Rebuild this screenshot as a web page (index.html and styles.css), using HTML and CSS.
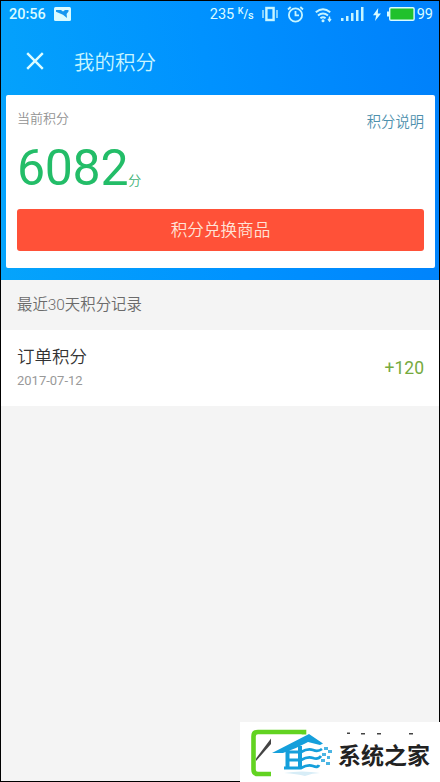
FILE: index.html
```html
<!DOCTYPE html>
<html lang="zh-CN">
<head>
<meta charset="utf-8">
<title>我的积分</title>
<link rel="stylesheet" href="styles.css">
</head>
<body>
<div class="screen">
  <header class="hero">
    <div class="status">
      <span class="time">20:56</span>
      <svg class="photo" width="17" height="14" viewBox="0 0 17 14"><rect width="17" height="14" rx="1.5" fill="#d9fbff"/><path d="M2 3h5l2 1.5L11 3h3.5v1.5L12.6 7l.4 4-4-3.2L2 4.8Z" fill="#1597ef"/></svg>
      <span class="speed">235</span>
      <span class="unit"><sup>K</sup>/<sub>s</sub></span>
      <svg class="vibrate" width="16" height="16" viewBox="0 0 16 16" fill="none" stroke="#c6f5ff"><rect x="4.4" y="2" width="7.2" height="12" stroke-width="2.4"/><path d="M1 4v8M15 4v8" stroke-width="1.3"/></svg>
      <svg class="alarm" width="17" height="17" viewBox="0 0 17 17" fill="none" stroke="#c6f5ff" stroke-width="1.8"><circle cx="8.5" cy="9" r="6.6"/><path d="M8.5 5v4.3H12M1 3.5 3.7 1M16 3.5 13.3 1"/></svg>
      <svg class="wifi" width="17" height="16" viewBox="0 0 17 16" fill="none" stroke="#c6f5ff" stroke-width="2"><path d="M.8 5.2Q8 -.7 15.2 5.2M3 8.5q5-4 10 0M5.4 11.2q2.6-2 5.2 0"/><circle cx="8" cy="13.7" r="1.5" fill="#c6f5ff" stroke="none"/><path d="M14.5 9.5v4M13 12l1.5 2 1.5-2" stroke-width="1.4"/></svg>
      <svg class="signal" width="23" height="14" viewBox="0 0 23 14" fill="#c6f5ff"><path d="M0 11h2.5v3H0zM5 9h2.5v5H5zM10 6h2.5v8H10zM15 3h2.5v11H15zM20 0h2.5v14H20z"/></svg>
      <svg class="bolt" width="8" height="13" viewBox="0 0 8 13"><path d="M5.2 0 0 7.2h3.2L2 13l6-7.6H4.8z" fill="#d9fbff"/></svg>
      <svg class="battery" width="28" height="14" viewBox="0 0 28 14"><path d="M0 4.5h3v5H0z" fill="#d9fbff"/><rect x="2.7" y=".7" width="24.4" height="12.6" rx="1.2" fill="#20c12c" stroke="#d9fbff" stroke-width="1.4"/></svg>
      <span class="percent">99</span>
    </div>
    <div class="titlebar">
      <svg class="close" width="18" height="18" viewBox="0 0 18 18"><path d="m1.2 1.2 15.6 15.6M16.8 1.2 1.2 16.8" stroke="#dcfcff" stroke-width="2.4"/></svg>
      <h1>我的积分</h1>
    </div>
    <section class="card">
      <div class="card-head"><span class="label">当前积分</span><a class="help">积分说明</a></div>
      <div class="score"><span class="value">6082</span><span class="fen">分</span></div>
      <button class="redeem">积分兑换商品</button>
    </section>
  </header>
  <h2 class="section-title">最近30天积分记录</h2>
  <div class="record">
    <div class="info"><div class="name">订单积分</div><div class="date">2017-07-12</div></div>
    <div class="points">+120</div>
  </div>
</div>
<div class="brand">
  <svg class="brand-logo" width="96" height="60" viewBox="0 0 96 60">
    <path d="M64 12.500V10H18q-4.500 0-4.500 4.500v33q0 4.500 4.500 4.500h13" fill="none" stroke="#62d321" stroke-width="4.600"/>
    <path d="m16 36.500 15-20v5.500L16 39Z" fill="#444"/>
    <path d="M32 31 69 12 83 21.500l-3 1.500-12-3-12 6-13 5Z" fill="#159fdb"/>
    <g fill="none" stroke="#159fdb"><path d="M47.500 28v18M60 24v21" stroke-width="4"/><path d="M46 30h15q7-4 12-2t9-1M47 38h14q7-4 12-2t8-2M44 46h17q7-4 12-2t6-1" stroke-width="2.800"/></g>
    <path d="M84 25h4v3h-4zM88 28h4v3h-4zM82 31h4v3h-4zM87 34h3v3h-3zM81 37h4v3h-4zM86 40h4v3h-4z" fill="#4bb5e3"/>
    <path d="M44 51q18-3 36 0-8 0-15 3-8-2-21-3Z" fill="#d7edf7"/>
  </svg>
  <div class="brand-copy">
    <svg width="92" height="14" viewBox="0 0 92 14"><path d="M9 10.500h3V12H9zM23 11h4v1.500h-4zM39 11h4v1.500h-4zM71 11h4v1.500h-4z" fill="#444"/></svg>
    <div class="brand-name">系统之家</div>
  </div>
</div>
</body>
</html>
```
FILE: styles.css
```css
* { box-sizing: border-box; }
body { margin: 0; width: 440px; height: 782px; overflow: hidden; position: relative; font-family: Roboto, "Noto Sans CJK SC", sans-serif; font-weight: 300; }
.screen { height: 782px; border: 1px solid #000; background: #f4f4f4; }
.hero { height: 279px; padding: 0 4px 0 5px; background: linear-gradient(80deg, #05a4fb, #0092ff 50%, #0080fb); }
.status { height: 26px; margin-left: -5px; margin-right: -4px; padding: 0 6px 0 8px; display: flex; align-items: center; color: #d9fbff; font-size: 14.5px; font-weight: 500; line-height: 27px; }
.status svg { flex: none; }
.time { width: 37px; }
.photo { margin-left: 8px; }
.speed { margin-left: 139px; width: 25px; font-weight: 400; }
.unit { margin-left: 3px; width: 16px; font-size: 12px; white-space: nowrap; }
.unit sup, .unit sub { font-size: 9px; line-height: 0; }
.unit sup { vertical-align: 4px; }
.unit sub { vertical-align: -1px; font-size: 11px; }
.vibrate { margin-left: 8px; }
.alarm { margin-left: 9px; }
.wifi { margin-left: 11px; margin-top: 2px; }
.signal { margin-left: 9px; }
.bolt { margin-left: 9px; }
.battery { margin-left: 6px; }
.percent { margin-left: 2px; font-weight: 400; }
.titlebar { height: 68px; display: flex; align-items: center; padding-left: 20px; }
.titlebar h1 { margin: 3px 0 0 30px; font-size: 20.5px; line-height: 30px; font-weight: 350; color: #c9f5ff; }
.card { height: 173px; padding: 14px 11px 0; background: #fff; border-radius: 2px; }
.card-head { display: flex; justify-content: space-between; line-height: 20px; }
.label { font-size: 13px; font-weight: 350; color: #929292; }
.help { margin-top: 3px; font-size: 14.3px; color: #4d90ad; font-weight: 350; }
.score { height: 77px; display: flex; align-items: baseline; line-height: 72px; }
.value { font-size: 50px; font-weight: 400; color: #23bd68; letter-spacing: -.3px; }
.fen { font-size: 13px; color: #3fb377; font-weight: 350; }
.redeem { display: block; width: 100%; height: 42px; padding: 0; border: 0; border-radius: 3px; background: #ff5138; color: #ffe3d7; font: 350 16.6px/41px Roboto, "Noto Sans CJK SC", sans-serif; }
.section-title { height: 50px; margin: 0; padding-left: 16px; font-size: 15.4px; line-height: 50px; font-weight: 350; color: #6b6b6b; }
.record { height: 76px; padding: 0 15px 0 16px; display: flex; align-items: center; justify-content: space-between; background: #fff; }
.name { font-size: 17.5px; line-height: 26px; color: #333; font-weight: 350; }
.date { font-size: 13px; line-height: 22px; color: #999; font-weight: 400; }
.points { font-size: 17.5px; color: #76aa3e; font-weight: 400; }
.brand { position: absolute; right: 0; bottom: 0; width: 200px; height: 60px; display: flex; background: #fff; }
.brand-logo { flex: none; }
.brand-copy { margin-left: 2px; }
.brand-copy svg { display: block; }
.brand-name { font: 700 23px/37px "Noto Sans CJK SC", sans-serif; color: #222; white-space: nowrap; }
```
